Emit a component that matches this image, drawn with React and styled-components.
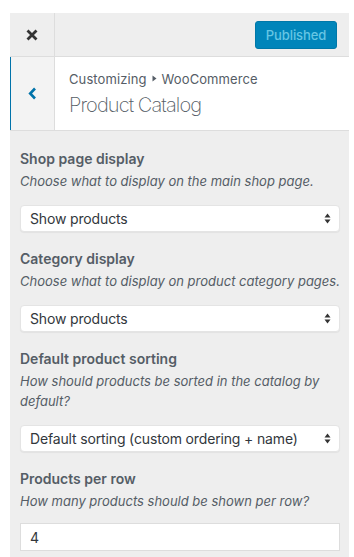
import React from "react";
import styled, { createGlobalStyle } from "styled-components";

const GlobalStyle = createGlobalStyle`
  html, body {
    margin: 0;
    padding: 0;
    background: #fff;
    height: 100%;
  }
  body {
    font-family: Inter, "Open Sans", "Liberation Sans", sans-serif;
    color: #555d66;
    -webkit-font-smoothing: antialiased;
  }
  #root {
    height: 100%;
  }
`;

const Page = styled.div`
  box-sizing: border-box;
  min-height: 100%;
  display: flex;
  padding: 13px 5px 0 10px;
`;

const Panel = styled.div`
  flex: 1;
  display: flex;
  flex-direction: column;
  background: #eee;
`;

const TopBar = styled.div`
  flex-shrink: 0;
  display: flex;
  align-items: center;
  height: 43px;
  border-bottom: 1px solid #ddd;
  background: #eee;
`;

const CloseButton = styled.div`
  display: flex;
  align-items: center;
  justify-content: center;
  width: 44px;
  height: 100%;
  border-right: 1px solid #ddd;
  color: #333;
`;

const PublishButton = styled.div`
  margin-left: auto;
  margin-right: 12px;
  box-sizing: border-box;
  height: 28px;
  width: 82px;
  display: flex;
  align-items: center;
  justify-content: center;
  background: #0085ba;
  border: 1px solid #0078a8;
  border-radius: 3px;
  color: #66c6e4;
  font-size: 13px;
  font-weight: 500;
  letter-spacing: -0.1px;
`;

const SectionHead = styled.div`
  flex-shrink: 0;
  display: flex;
  height: 73px;
  background: #fff;
  border-bottom: 1px solid #ddd;
`;

const BackButton = styled.div`
  display: flex;
  align-items: center;
  justify-content: center;
  width: 43px;
  border-left: 1px solid #0073aa;
  border-right: 1px solid #ddd;
  background: #f3f3f3;
  color: #0073aa;
`;

const TitleBlock = styled.div`
  display: flex;
  flex-direction: column;
  justify-content: center;
  padding-left: 14px;
  padding-top: 1px;
`;

const Crumb = styled.div`
  font-size: 13px;
  line-height: 18px;
  color: #555d66;
  display: flex;
  align-items: center;
  gap: 5px;
  letter-spacing: 0.1px;
`;

const Title = styled.div`
  margin-top: 3px;
  font-size: 20px;
  font-weight: 200;
  line-height: 28px;
  color: #555d66;
  letter-spacing: -0.9px;
`;

const Controls = styled.div`
  flex: 1;
  padding: 17px 9px 0 10px;
`;

const Control = styled.div`
  margin-bottom: 16px;
`;

const Label = styled.div`
  font-size: 14px;
  font-weight: 600;
  line-height: 21px;
  color: #555d66;
`;

const Description = styled.div`
  margin-top: 2px;
  font-size: 13px;
  font-style: italic;
  line-height: 20px;
  color: #555d66;
`;

const Select = styled.div`
  box-sizing: border-box;
  margin-top: 14px;
  height: 27px;
  display: flex;
  align-items: center;
  padding: 0 8px 0 9px;
  background: #fff;
  border: 1px solid #e4e4e4;
  border-radius: 4px;
  box-shadow: 0 1px 1px rgba(0, 0, 0, 0.05);
  font-size: 14px;
  color: #32373c;
`;

const SelectText = styled.span`
  flex: 1;
  letter-spacing: -0.15px;
`;

const TextInput = styled.div`
  box-sizing: border-box;
  margin-top: 12px;
  height: 28px;
  display: flex;
  align-items: center;
  padding: 0 9px;
  background: #fff;
  border: 1px solid #ddd;
  font-size: 14px;
  color: #32373c;
`;

const Arrows = () => (
  <svg width="7" height="11" viewBox="0 0 7 11">
    <path d="M3.5 0.5 L6.5 4.5 H0.5 Z" fill="#333" />
    <path d="M3.5 10.5 L6.5 6.5 H0.5 Z" fill="#333" />
  </svg>
);

const controls = [
  {
    label: "Shop page display",
    desc: "Choose what to display on the main shop page.",
    value: "Show products"
  },
  {
    label: "Category display",
    desc: "Choose what to display on product category pages.",
    value: "Show products"
  },
  {
    label: "Default product sorting",
    desc: "How should products be sorted in the catalog by default?",
    value: "Default sorting (custom ordering + name)"
  }
];

export default function App() {
  return (
    <>
      <GlobalStyle />
      <Page>
        <Panel>
          <TopBar>
            <CloseButton>
              <svg width="12" height="12" viewBox="0 0 12 12">
                <path
                  d="M1.5 1.5 L10.5 10.5 M10.5 1.5 L1.5 10.5"
                  stroke="currentColor"
                  strokeWidth="2.8"
                />
              </svg>
            </CloseButton>
            <PublishButton>Published</PublishButton>
          </TopBar>
          <SectionHead>
            <BackButton>
              <svg width="9" height="13" viewBox="0 0 9 13">
                <path
                  d="M7 1.5 L2.2 6.5 L7 11.5"
                  fill="none"
                  stroke="currentColor"
                  strokeWidth="2.6"
                />
              </svg>
            </BackButton>
            <TitleBlock>
              <Crumb>
                Customizing
                <svg width="5" height="7" viewBox="0 0 5 7">
                  <path d="M0.5 0.5 L4.5 3.5 L0.5 6.5 Z" fill="#555d66" />
                </svg>
                WooCommerce
              </Crumb>
              <Title>Product Catalog</Title>
            </TitleBlock>
          </SectionHead>
          <Controls>
            {controls.map((c) => (
              <Control key={c.label}>
                <Label>{c.label}</Label>
                <Description>{c.desc}</Description>
                <Select>
                  <SelectText>{c.value}</SelectText>
                  <Arrows />
                </Select>
              </Control>
            ))}
            <Control>
              <Label>Products per row</Label>
              <Description>How many products should be shown per row?</Description>
              <TextInput>4</TextInput>
            </Control>
          </Controls>
        </Panel>
      </Page>
    </>
  );
}
